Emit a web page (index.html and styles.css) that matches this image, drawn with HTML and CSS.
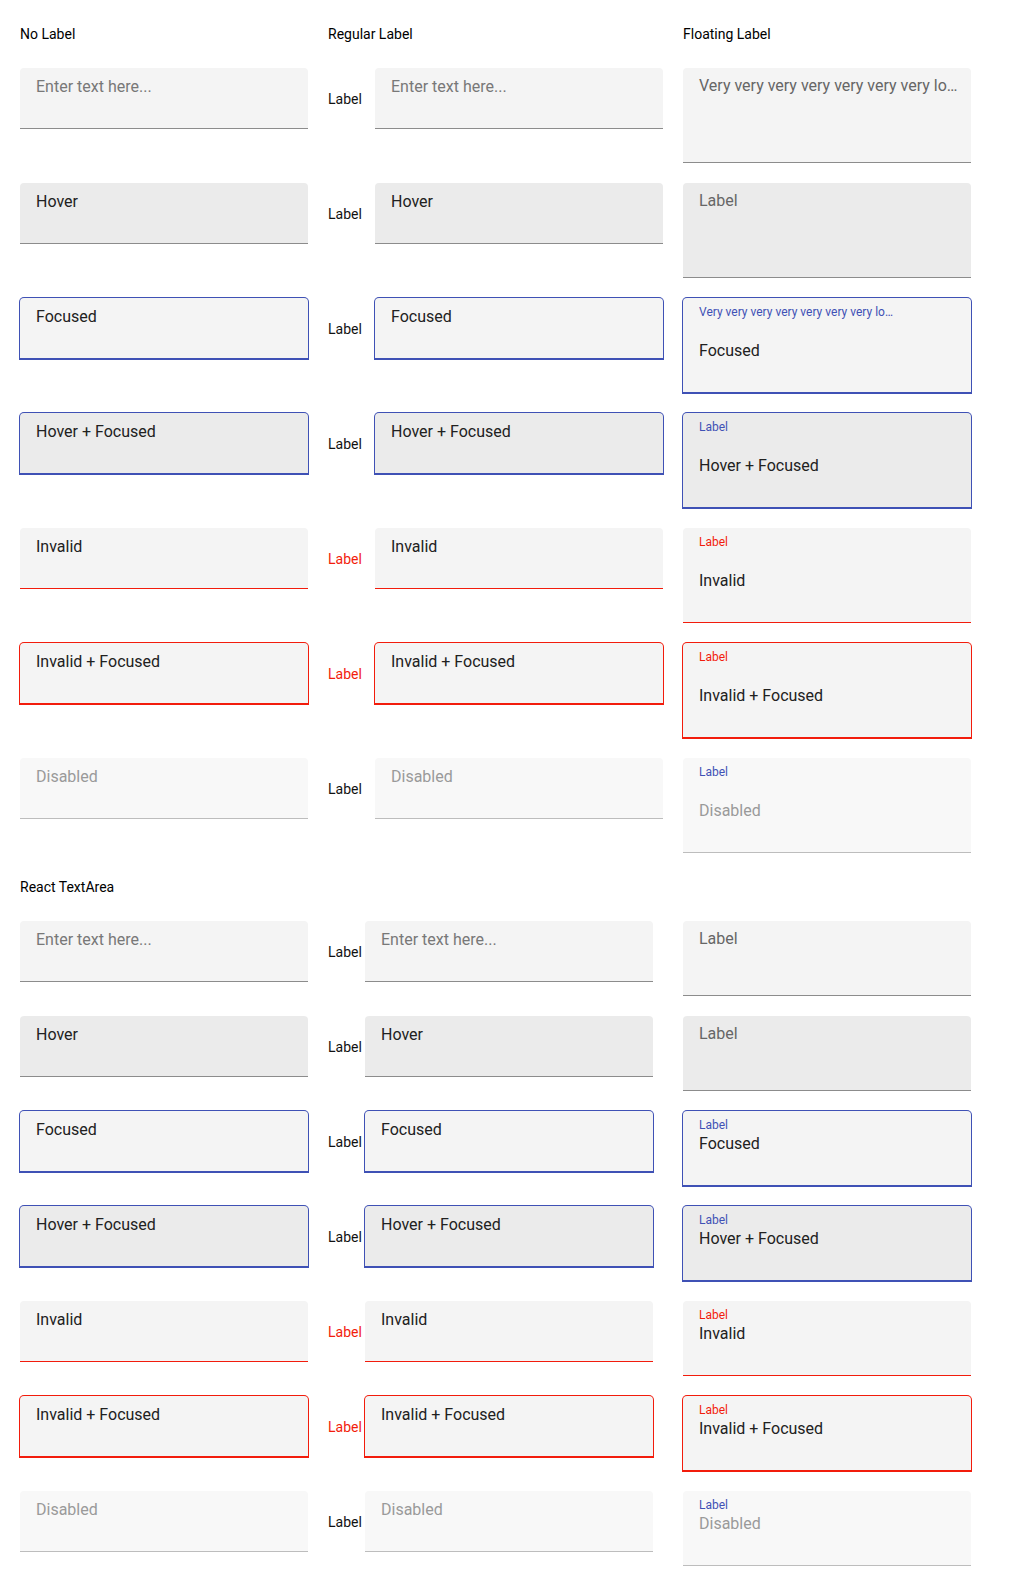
FILE: index.html
```html
<!DOCTYPE html>
<html lang="en">
<head>
<meta charset="utf-8">
<title>TextArea states</title>
<link rel="stylesheet" href="styles.css">
</head>
<body>
<main class="page">
  <div class="grid">
    <div class="heading">No Label</div>
    <div class="heading">Regular Label</div>
    <div class="heading">Floating Label</div>

    <!-- Row: default -->
    <div class="field"><div class="value placeholder">Enter text here...</div></div>
    <div class="labeled labeled--wide"><span class="side-label">Label</span><div class="field"><div class="value placeholder">Enter text here...</div></div></div>
    <div class="field field--float field--tall"><div class="float-label">Very very very very very very very lo…</div></div>

    <!-- Row: hover -->
    <div class="field is-hover"><div class="value">Hover</div></div>
    <div class="labeled labeled--wide"><span class="side-label">Label</span><div class="field is-hover"><div class="value">Hover</div></div></div>
    <div class="field field--float field--tall is-hover"><div class="float-label">Label</div></div>

    <!-- Row: focused -->
    <div class="field is-focused"><div class="value">Focused</div></div>
    <div class="labeled labeled--wide"><span class="side-label">Label</span><div class="field is-focused"><div class="value">Focused</div></div></div>
    <div class="field field--float field--tall is-focused"><div class="float-label is-up">Very very very very very very very lo…</div><div class="value value--far">Focused</div></div>

    <!-- Row: hover + focused -->
    <div class="field is-hover is-focused"><div class="value">Hover + Focused</div></div>
    <div class="labeled labeled--wide"><span class="side-label">Label</span><div class="field is-hover is-focused"><div class="value">Hover + Focused</div></div></div>
    <div class="field field--float field--tall is-hover is-focused"><div class="float-label is-up">Label</div><div class="value value--far">Hover + Focused</div></div>

    <!-- Row: invalid -->
    <div class="field is-invalid"><div class="value">Invalid</div></div>
    <div class="labeled labeled--wide"><span class="side-label is-error">Label</span><div class="field is-invalid"><div class="value">Invalid</div></div></div>
    <div class="field field--float field--tall is-invalid"><div class="float-label is-up">Label</div><div class="value value--far">Invalid</div></div>

    <!-- Row: invalid + focused -->
    <div class="field is-invalid is-focused"><div class="value">Invalid + Focused</div></div>
    <div class="labeled labeled--wide"><span class="side-label is-error">Label</span><div class="field is-invalid is-focused"><div class="value">Invalid + Focused</div></div></div>
    <div class="field field--float field--tall is-invalid is-focused"><div class="float-label is-up">Label</div><div class="value value--far">Invalid + Focused</div></div>

    <!-- Row: disabled -->
    <div class="field is-disabled"><div class="value">Disabled</div></div>
    <div class="labeled labeled--wide"><span class="side-label">Label</span><div class="field is-disabled"><div class="value">Disabled</div></div></div>
    <div class="field field--float field--tall is-disabled"><div class="float-label is-up">Label</div><div class="value value--far">Disabled</div></div>
  </div>

  <div class="heading heading--section">React TextArea</div>

  <div class="grid">
    <!-- Row: default -->
    <div class="field"><div class="value placeholder">Enter text here...</div></div>
    <div class="labeled labeled--narrow"><span class="side-label">Label</span><div class="field"><div class="value placeholder">Enter text here...</div></div></div>
    <div class="field field--float field--mid"><div class="float-label">Label</div></div>

    <!-- Row: hover -->
    <div class="field is-hover"><div class="value">Hover</div></div>
    <div class="labeled labeled--narrow"><span class="side-label">Label</span><div class="field is-hover"><div class="value">Hover</div></div></div>
    <div class="field field--float field--mid is-hover"><div class="float-label">Label</div></div>

    <!-- Row: focused -->
    <div class="field is-focused"><div class="value">Focused</div></div>
    <div class="labeled labeled--narrow"><span class="side-label">Label</span><div class="field is-focused"><div class="value">Focused</div></div></div>
    <div class="field field--float field--mid is-focused"><div class="float-label is-up">Label</div><div class="value value--near">Focused</div></div>

    <!-- Row: hover + focused -->
    <div class="field is-hover is-focused"><div class="value">Hover + Focused</div></div>
    <div class="labeled labeled--narrow"><span class="side-label">Label</span><div class="field is-hover is-focused"><div class="value">Hover + Focused</div></div></div>
    <div class="field field--float field--mid is-hover is-focused"><div class="float-label is-up">Label</div><div class="value value--near">Hover + Focused</div></div>

    <!-- Row: invalid -->
    <div class="field is-invalid"><div class="value">Invalid</div></div>
    <div class="labeled labeled--narrow"><span class="side-label is-error">Label</span><div class="field is-invalid"><div class="value">Invalid</div></div></div>
    <div class="field field--float field--mid is-invalid"><div class="float-label is-up">Label</div><div class="value value--near">Invalid</div></div>

    <!-- Row: invalid + focused -->
    <div class="field is-invalid is-focused"><div class="value">Invalid + Focused</div></div>
    <div class="labeled labeled--narrow"><span class="side-label is-error">Label</span><div class="field is-invalid is-focused"><div class="value">Invalid + Focused</div></div></div>
    <div class="field field--float field--mid is-invalid is-focused"><div class="float-label is-up">Label</div><div class="value value--near">Invalid + Focused</div></div>

    <!-- Row: disabled -->
    <div class="field is-disabled"><div class="value">Disabled</div></div>
    <div class="labeled labeled--narrow"><span class="side-label">Label</span><div class="field is-disabled"><div class="value">Disabled</div></div></div>
    <div class="field field--float field--mid is-disabled"><div class="float-label is-up">Label</div><div class="value value--near">Disabled</div></div>
  </div>
</main>
</body>
</html>
```

FILE: styles.css
```css
* {
  box-sizing: border-box;
}

html, body {
  margin: 0;
  padding: 0;
  background: #ffffff;
}

body {
  font-family: Roboto, "Liberation Sans", Arial, sans-serif;
  color: #212121;
}

.page {
  padding: 24px 20px 20px 20px;
}

.grid {
  display: grid;
  grid-template-columns: 288px 335px 288px;
  column-gap: 20px;
  row-gap: 20px;
  align-items: start;
}

.heading {
  font-size: 14px;
  line-height: 20px;
  color: #000000;
  margin-bottom: 4px;
}

.heading--section {
  margin: 24px 0 24px 0;
}

.labeled {
  display: flex;
  align-items: center;
}

.side-label {
  flex: none;
  font-size: 14px;
  line-height: 20px;
  color: #111111;
}

.labeled--wide .side-label {
  width: 47px;
}

.labeled--narrow .side-label {
  width: 37px;
}

.side-label.is-error {
  color: #f21c0c;
}

.field {
  width: 288px;
  height: 61px;
  padding: 7px 16px 0 16px;
  background: #f4f4f4;
  border-bottom: 1px solid #8c8c8c;
  border-radius: 4px 4px 0 0;
  flex: none;
}

.field--tall {
  height: 95px;
}

.field--mid {
  height: 75px;
}

.field--float {
  padding-top: 6px;
}

.value {
  font-size: 16px;
  line-height: 24px;
  color: #212121;
  white-space: nowrap;
}

.value.placeholder {
  color: #787878;
}

.value--far {
  margin-top: 19px;
}

.value--near {
  margin-top: -1px;
}

.float-label {
  font-size: 16px;
  line-height: 24px;
  color: #666666;
  white-space: nowrap;
}

.float-label.is-up {
  font-size: 12px;
  line-height: 16px;
  color: #3f51b5;
}

.field.is-hover {
  background: #ebebeb;
}

.field.is-focused {
  border-bottom-color: #3f51b5;
  box-shadow: 0 0 0 1px #3f51b5;
}

.field.is-invalid {
  border-bottom-color: #f21c0c;
}

.field.is-invalid .float-label {
  color: #f21c0c;
}

.field.is-invalid.is-focused {
  box-shadow: 0 0 0 1px #f21c0c;
}

.field.is-disabled {
  background: #f8f8f8;
  border-bottom-color: #bdbdbd;
}

.field.is-disabled .value {
  color: #9a9a9a;
}
```
